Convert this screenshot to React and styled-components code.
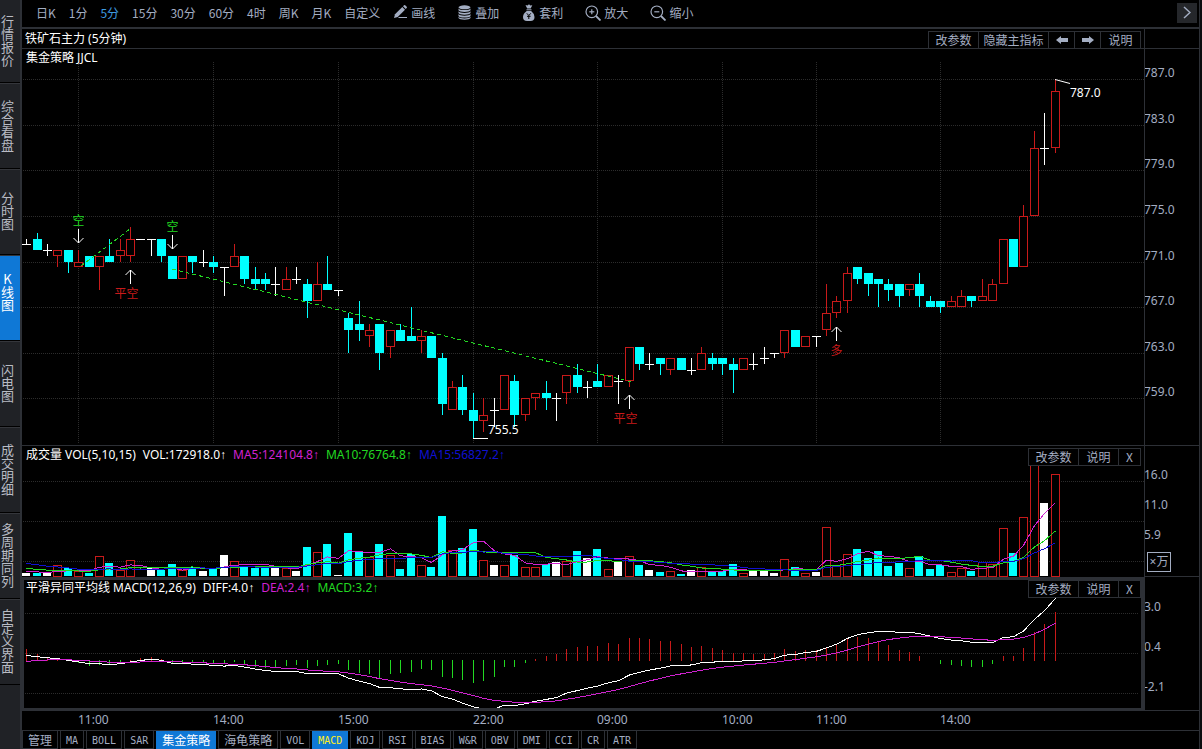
import React from "react";
import styled, { createGlobalStyle } from "styled-components";

const GlobalStyle = createGlobalStyle`
  * {
    box-sizing: border-box;
  }

  body {
    margin: 0;
    background: #000;
    color: #a3adc2;
    font-family: "Noto Sans", "Liberation Sans", "Noto Sans CJK SC", sans-serif;
    font-size: 12px;
  }

  button {
    margin: 0;
    padding: 0;
    border: 0;
    background: none;
    color: inherit;
    font-family: "Noto Sans CJK SC", sans-serif;
    font-size: 12px;
    cursor: pointer;
    white-space: nowrap;
  }
`;

const LINE = "#2d3036";
const CYAN = "#00ffff";
const RED = "#c81a1a";
const WHITE = "#ffffff";
const GREEN = "#22d822";
const MAGENTA = "#d022d0";
const BLUE = "#1010d0";

const Page = styled.div`
  display: flex;
  min-height: 100vh;
  overflow: hidden;
`;

const Sidebar = styled.nav`
  flex: none;
  width: 22px;
  background: #202226;
  border-right: 2px solid ${LINE};
`;

const SideButton = styled.button`
  display: flex;
  align-items: center;
  width: 20px;
  height: 86px;
  padding-left: 1px;
  padding-bottom: ${p => (p.$active ? 14 : 3)}px;
  border-top: 1px solid #34363b;
  border-bottom: 1px solid #000;
  background: ${p => (p.$active ? "#0f78d6" : "transparent")};
  color: ${p => (p.$active ? "#fff" : "#b9bcc4")};

  &:first-child {
    height: 83px;
    border-top: 0;
  }

  span {
    width: 13px;
    font-size: 13px;
    line-height: 13px;
    text-align: center;
    white-space: normal;
    word-break: break-all;
  }
`;

const Main = styled.main`
  flex: 1;
  min-width: 0;
  display: flex;
  flex-direction: column;
`;

const Edge = styled.div`
  flex: none;
  width: 3px;
  border-left: 1px solid ${LINE};
  background: #0c0d0f;
`;

const Toolbar = styled.div`
  display: flex;
  align-items: center;
  height: 29px;
  padding: 0 2px 2px 14px;
  border-bottom: 2px solid ${LINE};
`;

const Group = styled.div`
  display: flex;
  gap: ${p => p.$gap}px;
  margin-right: 13px;
`;

const Period = styled.button`
  line-height: 18px;
  color: ${p => (p.$active ? "#3e9be0" : "#a3adc2")};
`;

const Tool = styled.button`
  display: flex;
  align-items: center;
  gap: 3px;
  line-height: 18px;
`;

const MoreButton = styled.button`
  display: flex;
  align-items: center;
  justify-content: center;
  width: 20px;
  height: 20px;
  margin-left: auto;
  background: #25272b;
`;

const TitleRow = styled.div`
  display: flex;
  height: 20px;
  border-bottom: 1px solid ${LINE};
`;

const Title = styled.h1`
  flex: 1;
  margin: 0;
  padding-left: 3px;
  color: #fff;
  font-size: 12px;
  font-weight: 400;
  line-height: 19px;
`;

const Actions = styled.div`
  display: flex;
  height: 18px;
  margin-top: ${p => (p.$flush ? 0 : 2)}px;
  margin-right: ${p => (p.$flush ? 0 : 3)}px;
`;

const Action = styled.button`
  display: flex;
  align-items: center;
  justify-content: center;
  width: ${p => p.$width}px;
  margin-left: -1px;
  border: 1px solid ${LINE};
  background: #000;
  line-height: 16px;
`;

const TitleAside = styled.div`
  width: 55px;
  border-left: 1px solid ${LINE};
`;

const Pane = styled.section`
  display: grid;
  grid-template-columns: minmax(0, 1fr) 55px;
  grid-template-rows: 100%;
  height: ${p => p.$height}px;
`;

const Plot = styled.div`
  position: relative;
  border-bottom: ${p => (p.$line ? 1 : 0)}px solid ${LINE};
  ${p => p.$selected && `border: 3px solid ${LINE}; border-left-width: 2px;`}
`;

const Chart = styled.svg`
  display: block;
  width: 100%;
  height: 100%;
  overflow: hidden;

  text {
    font-family: "Noto Sans", "Noto Sans CJK SC", sans-serif;
    font-size: 12px;
  }
`;

const Axis = styled.div`
  position: relative;
  border-left: 1px solid ${LINE};
  border-bottom: 1px solid ${LINE};
`;

const PaneHead = styled.div`
  position: absolute;
  top: 0;
  left: 0;
  right: 0;
  display: flex;
  justify-content: space-between;
  padding-left: ${p => p.$left}px;
`;

const Readout = styled.div`
  display: flex;
  gap: 7px;
  line-height: ${p => (p.$flush ? 15 : 18)}px;
  white-space: nowrap;
`;

const Value = styled.span`
  color: ${p => p.$color};
`;

const Unit = styled.span`
  position: absolute;
  left: 2px;
  bottom: 4px;
  width: 24px;
  border: 1px solid #a3adc2;
  line-height: 18px;
  text-align: center;
`;

const TimeAxis = styled.div`
  height: 20px;
  border-bottom: 1px solid ${LINE};
`;

const Tabs = styled.div`
  flex: 1;
  display: flex;
  gap: 2px;
`;

const Tab = styled.button`
  height: 18px;
  padding: ${p => (p.$latin ? 1 : 0)}px 5px 0;
  border: 1px solid ${p => (p.$active ? "#0f78d6" : LINE)};
  border-top: 0;
  background: ${p => (p.$active ? "#0f78d6" : "transparent")};
  color: ${p => p.$color || "#a3adc2"};
  line-height: 18px;
  ${p => p.$latin && `font-family: "DejaVu Sans Mono", monospace; font-size: 10px;`}
`;

const SIDE_ITEMS = [
  "行情报价",
  "综合看盘",
  "分时图",
  "K线图",
  "闪电图",
  "成交明细",
  "多周期同列",
  "自定义界面"
];

const PERIODS = ["日K", "1分", "5分", "15分", "30分", "60分", "4时", "周K", "月K", "自定义"];

const TABS = [
  "管理", "MA", "BOLL", "SAR", "集金策略", "海龟策略", "VOL", "MACD", "KDJ",
  "RSI", "BIAS", "W&R", "OBV", "DMI", "CCI", "CR", "ATR"
];

// open, high, low, close
const CANDLES = [
  [772.5, 773, 772.5, 772.5], [773, 773.5, 772, 772], [772, 772.5, 771.5, 772],
  [771.5, 772, 770.5, 772], [772, 772, 770, 771], [770.5, 772, 770.5, 771],
  [771.5, 771.5, 770.5, 770.5], [770.5, 771.5, 768.5, 771.5], [771.5, 773, 771, 771],
  [771.5, 773, 771, 772], [771.5, 774, 771, 773], [773, 773, 773, 773],
  [773, 773, 771.5, 773], [773, 773, 771, 771.5], [771.5, 771.5, 769.5, 769.5],
  [769.5, 771.5, 769.5, 771.5], [771.5, 771.5, 770, 771], [771, 772, 770.5, 771],
  [771, 771.5, 770, 770.5], [770.5, 770.5, 768, 770.5], [770.5, 772.5, 770.5, 771.5],
  [771.5, 771.5, 769, 769.5], [769.5, 770.5, 768.5, 769], [769.5, 770, 768.5, 769],
  [769, 770.5, 768, 769], [768.5, 770.5, 768.5, 769.5], [769.5, 770.5, 769, 769.5],
  [769, 769.5, 766, 767.5], [767.5, 771, 767.5, 769], [769, 771.5, 768.5, 768.5],
  [768.5, 768.5, 768, 768.5], [766, 766.5, 763, 765], [765.5, 767.5, 764, 765],
  [764.5, 765.5, 763.5, 765], [765.5, 765.5, 761.5, 763], [763.5, 765, 762.5, 765],
  [765, 765.5, 764, 764], [764.5, 767, 764, 764], [764, 765, 763, 764.5],
  [764.5, 764.5, 762.5, 762.5], [762.5, 763, 757.5, 758.5], [758, 760.5, 758, 760],
  [760, 761, 757.5, 758], [758, 759.5, 755.5, 757], [757, 759, 756, 757.5],
  [758, 759, 756.5, 758], [758, 761, 758, 761], [760.5, 761, 756.5, 757.5],
  [757.5, 759, 757, 759], [759, 759.5, 758, 759.5], [759.5, 760.5, 758, 759],
  [759, 759.5, 757, 759], [759.5, 761, 758.5, 761], [761, 762, 759.5, 760],
  [760, 760.5, 759, 760], [760.5, 762, 760, 760], [760, 761, 760, 761],
  [760.5, 761, 758.5, 760.5], [760.5, 763.5, 760, 763.5], [763.5, 763.5, 761.5, 762],
  [762, 763, 761.5, 762], [762.5, 762.5, 761, 762], [761.5, 762.5, 761, 762.5],
  [762.5, 762.5, 761.5, 761.5], [761.5, 762.5, 761, 761.5], [761.5, 763.5, 761.5, 763],
  [762.5, 763, 761.5, 762], [762.5, 762.5, 761, 762], [762, 762.5, 759.5, 761.5],
  [761.5, 762.5, 761.5, 762.5], [762, 763, 761.5, 762], [762.5, 763.5, 762, 762.5],
  [763, 763, 762.5, 763], [763, 765, 762.5, 765], [765, 765, 763.5, 763.5],
  [763.5, 764.5, 763.5, 764.5], [764.5, 764.5, 763.5, 764.5], [765, 769, 764.5, 766.5],
  [766.5, 768, 766, 767.5], [767.5, 770.5, 766.5, 770], [770.5, 770.5, 769, 769.5],
  [770, 770, 768, 769], [769.5, 769.5, 767, 769], [769, 769.5, 767.5, 768.5],
  [769, 769, 767, 768], [768.5, 769, 768, 769], [769, 770, 767, 768],
  [767.5, 768, 767, 767], [767.5, 767.5, 766.5, 767], [767, 768, 767, 767.5],
  [767, 768.5, 767, 768], [768, 768, 767, 767.5], [767.5, 769.5, 767.5, 768],
  [767.5, 769.5, 767.5, 769], [769, 773, 769, 773], [773, 773, 770.5, 770.5],
  [770.5, 776, 770.5, 775], [775, 782.5, 775, 781], [781, 784, 779.5, 781],
  [781, 787, 780.5, 786]
];

const VOLUMES = [
  3, 3, 3, 11, 8, 5, 3, 20, 13, 6, 16, 0, 8, 6, 12, 6, 9, 5, 7, 21,
  15, 10, 8, 8, 9, 8, 5, 29, 24, 32, 1, 43, 24, 19, 32, 21, 7, 22, 11, 9,
  60, 26, 28, 47, 16, 11, 11, 21, 9, 9, 12, 14, 15, 25, 18, 27, 7, 15, 20, 11,
  6, 4, 5, 2, 6, 9, 5, 5, 12, 3, 5, 5, 3, 17, 9, 3, 4, 49, 11, 22,
  27, 18, 25, 10, 13, 8, 20, 7, 11, 4, 8, 5, 14, 12, 48, 23, 59, 112, 73, 102
];

// volumes before the first visible bar, needed by the moving averages
const EARLIER = [23, 23, 23, 23, 23, 11, 11, 11, 11, 11, 5, 6, 5, 6];

const TIMES = [
  [5, "11:00"], [18, "14:00"], [30, "15:00"], [43, "22:00"],
  [55, "09:00"], [67, "10:00"], [76, "11:00"], [88, "14:00"]
];

const PRICES = [787, 783, 779, 775, 771, 767, 763, 759];

const barX = i => Math.floor(4.7 + i * 10.387);
const priceY = p => Math.round(30.3 + (787 - p) * 11.39);
const macdY = v => 83 - v * 15.5;

const kindColor = ([open, , , close]) =>
  close > open ? RED : close < open ? CYAN : WHITE;

const average = n => {
  const all = [...EARLIER, ...VOLUMES];
  return VOLUMES.map((_, i) => {
    const end = i + EARLIER.length + 1;
    return all.slice(end - n, end).reduce((a, b) => a + b, 0) / n;
  });
};

const getMacd = () => {
  let fast = 772.7;
  let slow = 772.38;
  let dea = -0.06;
  return CANDLES.map(([, , , close], i) => {
    if (i > 0) {
      fast += ((close - fast) * 2) / 13;
      slow += ((close - slow) * 2) / 27;
      dea += ((fast - slow - dea) * 2) / 10;
    }
    return { diff: fast - slow, dea };
  });
};

const toPoints = (values, y) =>
  values.map((v, i) => `${barX(i) + 0.5},${y(v) + 0.5}`).join(" ");

const PencilIcon = () => (
  <svg width="15" height="15" viewBox="0 0 15 15" fill="currentColor" aria-hidden="true">
    <path d="M1 13l1-3.7L9.3 2l2.7 2.7L4.700 12z" />
    <path d="M10 1.300l1-1q.6-.5 1.200 0l1.500 1.500q.5.600 0 1.200l-1 1z" />
    <path d="M6 12h8v1H5z" />
  </svg>
);

const StackIcon = () => (
  <svg width="15" height="15" viewBox="0 0 15 15" fill="currentColor" aria-hidden="true">
    <ellipse cx="7.500" cy="2.300" rx="6" ry="2" />
    <path d="M1.500 3.400q1 1.700 6 1.700t6-1.700v1.900q-1 1.700-6 1.700t-6-1.700z" />
    <path d="M1.500 6.200q1 1.700 6 1.700t6-1.700v1.900q-1 1.700-6 1.700t-6-1.700z" />
    <path d="M1.500 9q1 1.700 6 1.700t6-1.700v1.900q-1 1.700-6 1.700t-6-1.700z" />
    <path d="M1.500 11.800q1 1.700 6 1.700t6-1.700v1.200q-1 1.700-6 1.700t-6-1.700z" />
  </svg>
);

const BagIcon = () => (
  <svg width="15" height="18" viewBox="0 0 15 18" fill="currentColor" aria-hidden="true">
    <path d="M4.500 1l2 .6L8 .3l1.300 1.200 2-.3L9.700 4.500H6.200z" />
    <path d="M5.500 5.300h5v1h-5z" />
    <path d="M5.700 7h4.500q3.300 2.700 3.300 6 0 4-4 4h-3.500q-4 0-4-4 0-3.300 3.700-6z" />
    <path
      d="M5.800 9.300l2 2.200 2-2.200M7.800 11.500v3.500M6 12.300h3.600"
      stroke="#000"
      fill="none"
    />
  </svg>
);

const ZoomIcon = ({ plus }) => (
  <svg
    width="16"
    height="16"
    viewBox="0 0 16 16"
    fill="none"
    stroke="currentColor"
    strokeWidth="1.200"
    aria-hidden="true"
  >
    <circle cx="6.800" cy="6.800" r="5.800" />
    <path d="M4.300 6.800h5" />
    {plus && <path d="M6.800 4.300v5" />}
    <path d="M11 11l4.500 4.500" strokeWidth="1.800" />
  </svg>
);

const Arrow = ({ left }) => (
  <svg width="12" height="8" viewBox="0 0 12 8" fill="currentColor" aria-hidden="true">
    <path d={left ? "M0 4l5-4v2h7v4H5v2z" : "M12 4L7 0v2H0v4h7v2z"} />
  </svg>
);

const GridLine = ({ y }) => (
  <line x1="1" x2="100%" y1={y + 0.5} y2={y + 0.5} stroke="#2c2c2c" strokeDasharray="1 1" />
);

const Signal = ({ index, y, text, down }) => {
  const x = barX(index) + 0.5;
  const tip = down ? y + 14 : y;
  const wing = down ? tip - 5 : tip + 5;
  const single = text.length === 1;
  return (
    <g>
      <path
        d={`M${x} ${y}v14M${x - 5} ${wing}L${x} ${tip}L${x + 5} ${wing}`}
        stroke={WHITE}
        fill="none"
      />
      <text
        x={single ? x - 6 : x - 16}
        y={down ? y - 4 : y + 28}
        fill={down ? GREEN : RED}
      >
        {text}
      </text>
    </g>
  );
};

const Candle = ({ candle, index }) => {
  const [open, high, low, close] = candle;
  const x = barX(index);
  const top = priceY(Math.max(open, close));
  const bottom = priceY(Math.min(open, close));
  const color = kindColor(candle);
  return (
    <g shapeRendering="crispEdges">
      <rect x={x} y={priceY(high)} width="1" height={priceY(low) - priceY(high)} fill={color} />
      {color === WHITE && <rect x={x - 4} y={top} width="9" height="1" fill={WHITE} />}
      {color === CYAN && (
        <rect x={x - 4} y={top} width="9" height={bottom - top} fill={CYAN} />
      )}
      {color === RED && (
        <rect
          x={x - 3.5}
          y={top + 0.5}
          width="8"
          height={bottom - top - 1}
          fill="#000"
          stroke={RED}
        />
      )}
    </g>
  );
};

const PricePane = () => (
  <Pane $height={397}>
    <Plot $line>
      <Chart role="img" aria-label="K线">
        {PRICES.map(p => (
          <GridLine key={p} y={priceY(p)} />
        ))}
        {TIMES.map(([i]) => (
          <line
            key={i}
            x1={barX(i) + 0.5}
            x2={barX(i) + 0.5}
            y1="13"
            y2="395"
            stroke="#2c2c2c"
            strokeDasharray="1 1"
          />
        ))}
        {CANDLES.map((c, i) => (
          <Candle key={i} candle={c} index={i} />
        ))}
        <g stroke={GREEN} strokeDasharray="4 3" shapeRendering="crispEdges">
          <line x1="59" y1="217" x2="108" y2="180" />
          <line x1="150" y1="220" x2="610" y2="333" />
        </g>
        <Signal index={5} y={180} text="空" down />
        <Signal index={14} y={186} text="空" down />
        <Signal index={10} y={221} text="平空" />
        <Signal index={58} y={346} text="平空" />
        <Signal index={78} y={278} text="多" />
        <path d="M1033 30.500l15 4M451 389.500h15" stroke={WHITE} />
        <text x="1048" y="48" fill={WHITE}>787.0</text>
        <text x="466" y="385" fill={WHITE}>755.5</text>
      </Chart>
      <PaneHead $left={4}>
        <Readout>
          <Value $color={WHITE}>集金策略 JJCL</Value>
        </Readout>
      </PaneHead>
    </Plot>
    <Axis>
      <Chart aria-hidden="true">
        {PRICES.map(p => (
          <text key={p} x="-1" y={priceY(p) - 2} fill="#a3adc2">
            {p.toFixed(1)}
          </text>
        ))}
      </Chart>
    </Axis>
  </Pane>
);

const PaneActions = ({ flush }) => (
  <Actions $flush={flush}>
    <Action $width={51}>改参数</Action>
    <Action $width={41}>说明</Action>
    <Action $width={23} aria-label="关闭">X</Action>
  </Actions>
);

const VolumePane = () => {
  const y = v => 130 - v;
  return (
    <Pane $height={131}>
      <Plot>
        <Chart role="img" aria-label="成交量">
          {[35, 75, 115].map(g => (
            <GridLine key={g} y={g} />
          ))}
          {VOLUMES.map((v, i) => {
            const color = kindColor(CANDLES[i]);
            const x = barX(i) - 4;
            if (color === RED) {
              return (
                <rect
                  key={i}
                  x={x + 0.5}
                  y={y(v) + 0.5}
                  width="8"
                  height={v}
                  fill="#000"
                  stroke={RED}
                  shapeRendering="crispEdges"
                />
              );
            }
            return <rect key={i} x={x} y={y(v)} width="8" height={v} fill={color} />;
          })}
          <g fill="none" shapeRendering="crispEdges">
            <polyline points={toPoints(average(5), y)} stroke={MAGENTA} />
            <polyline points={toPoints(average(10), y)} stroke={GREEN} />
            <polyline points={toPoints(average(15), y)} stroke={BLUE} />
          </g>
        </Chart>
        <PaneHead $left={4}>
          <Readout>
            <Value $color={WHITE}>成交量 VOL(5,10,15)</Value>
            <Value $color={WHITE}>VOL:172918.0↑</Value>
            <Value $color={MAGENTA}>MA5:124104.8↑</Value>
            <Value $color={GREEN}>MA10:76764.8↑</Value>
            <Value $color={BLUE}>MA15:56827.2↑</Value>
          </Readout>
          <PaneActions />
        </PaneHead>
      </Plot>
      <Axis>
        <Chart aria-hidden="true">
          <text x="-1" y="33" fill="#a3adc2">16.0</text>
          <text x="-1" y="63" fill="#a3adc2">11.0</text>
          <text x="-1" y="93" fill="#a3adc2">5.9</text>
        </Chart>
        <Unit>×万</Unit>
      </Axis>
    </Pane>
  );
};

const MacdPane = () => {
  const macd = getMacd();
  return (
    <Pane $height={134}>
      <Plot $selected>
        <Chart role="img" aria-label="MACD">
          <g transform="translate(-2 -3)">
            {[36, 76, 116].map(g => (
              <GridLine key={g} y={g} />
            ))}
            <g shapeRendering="crispEdges">
              {macd.map(({ diff, dea }, i) => {
                const size = Math.round(Math.abs(diff - dea) * 31);
                const up = diff > dea;
                return (
                  <rect
                    key={i}
                    x={barX(i)}
                    y={up ? 84 - size : 83}
                    width="1"
                    height={size}
                    fill={up ? RED : GREEN}
                  />
                );
              })}
            </g>
            <g fill="none" shapeRendering="crispEdges">
              <polyline points={toPoints(macd.map(m => m.diff), macdY)} stroke={WHITE} />
              <polyline points={toPoints(macd.map(m => m.dea), macdY)} stroke={MAGENTA} />
            </g>
          </g>
        </Chart>
        <PaneHead $left={2}>
          <Readout $flush>
            <Value $color={WHITE}>平滑异同平均线 MACD(12,26,9)</Value>
            <Value $color={WHITE}>DIFF:4.0↑</Value>
            <Value $color={MAGENTA}>DEA:2.4↑</Value>
            <Value $color={GREEN}>MACD:3.2↑</Value>
          </Readout>
          <PaneActions flush />
        </PaneHead>
      </Plot>
      <Axis>
        <Chart aria-hidden="true">
          <text x="-1" y="34" fill="#a3adc2">3.0</text>
          <text x="-1" y="74" fill="#a3adc2">0.4</text>
          <text x="-1" y="114" fill="#a3adc2">-2.1</text>
        </Chart>
      </Axis>
    </Pane>
  );
};

class App extends React.Component {
  state = {
    side: "K线图",
    period: "5分"
  };

  render() {
    const { side, period } = this.state;
    return (
      <Page>
        <GlobalStyle />
        <Sidebar>
          {SIDE_ITEMS.map(item => (
            <SideButton
              key={item}
              $active={item === side}
              onClick={() => this.setState({ side: item })}
            >
              <span>{item}</span>
            </SideButton>
          ))}
        </Sidebar>
        <Main>
          <Toolbar>
            <Group $gap={13}>
              {PERIODS.map(item => (
                <Period
                  key={item}
                  $active={item === period}
                  onClick={() => this.setState({ period: item })}
                >
                  {item}
                </Period>
              ))}
            </Group>
            <Group $gap={22}>
              <Tool><PencilIcon />画线</Tool>
              <Tool><StackIcon />叠加</Tool>
              <Tool><BagIcon />套利</Tool>
              <Tool><ZoomIcon plus />放大</Tool>
              <Tool><ZoomIcon />缩小</Tool>
            </Group>
            <MoreButton aria-label="更多">
              <svg width="8" height="13" viewBox="0 0 8 13" fill="none" stroke="currentColor" strokeWidth="1.500">
                <path d="M1 1l6 5.500-6 5.500" />
              </svg>
            </MoreButton>
          </Toolbar>
          <TitleRow>
            <Title>铁矿石主力 (5分钟)</Title>
            <Actions>
              <Action $width={51}>改参数</Action>
              <Action $width={71}>隐藏主指标</Action>
              <Action $width={27} aria-label="上一个"><Arrow left /></Action>
              <Action $width={27} aria-label="下一个"><Arrow /></Action>
              <Action $width={41}>说明</Action>
            </Actions>
            <TitleAside />
          </TitleRow>
          <PricePane />
          <VolumePane />
          <MacdPane />
          <TimeAxis>
            <Chart aria-hidden="true">
              {TIMES.map(([i, label]) => (
                <text key={i} x={barX(i)} y="13" fill="#a3adc2">{label}</text>
              ))}
            </Chart>
          </TimeAxis>
          <Tabs>
            {TABS.map(tab => (
              <Tab
                key={tab}
                $latin={/^[A-Z]/.test(tab)}
                $active={tab === "集金策略" || tab === "MACD"}
                $color={tab === "MACD" ? "#ffee22" : tab === "集金策略" ? "#fff" : undefined}
              >
                {tab}
              </Tab>
            ))}
          </Tabs>
        </Main>
        <Edge />
      </Page>
    );
  }
}

export default App;
